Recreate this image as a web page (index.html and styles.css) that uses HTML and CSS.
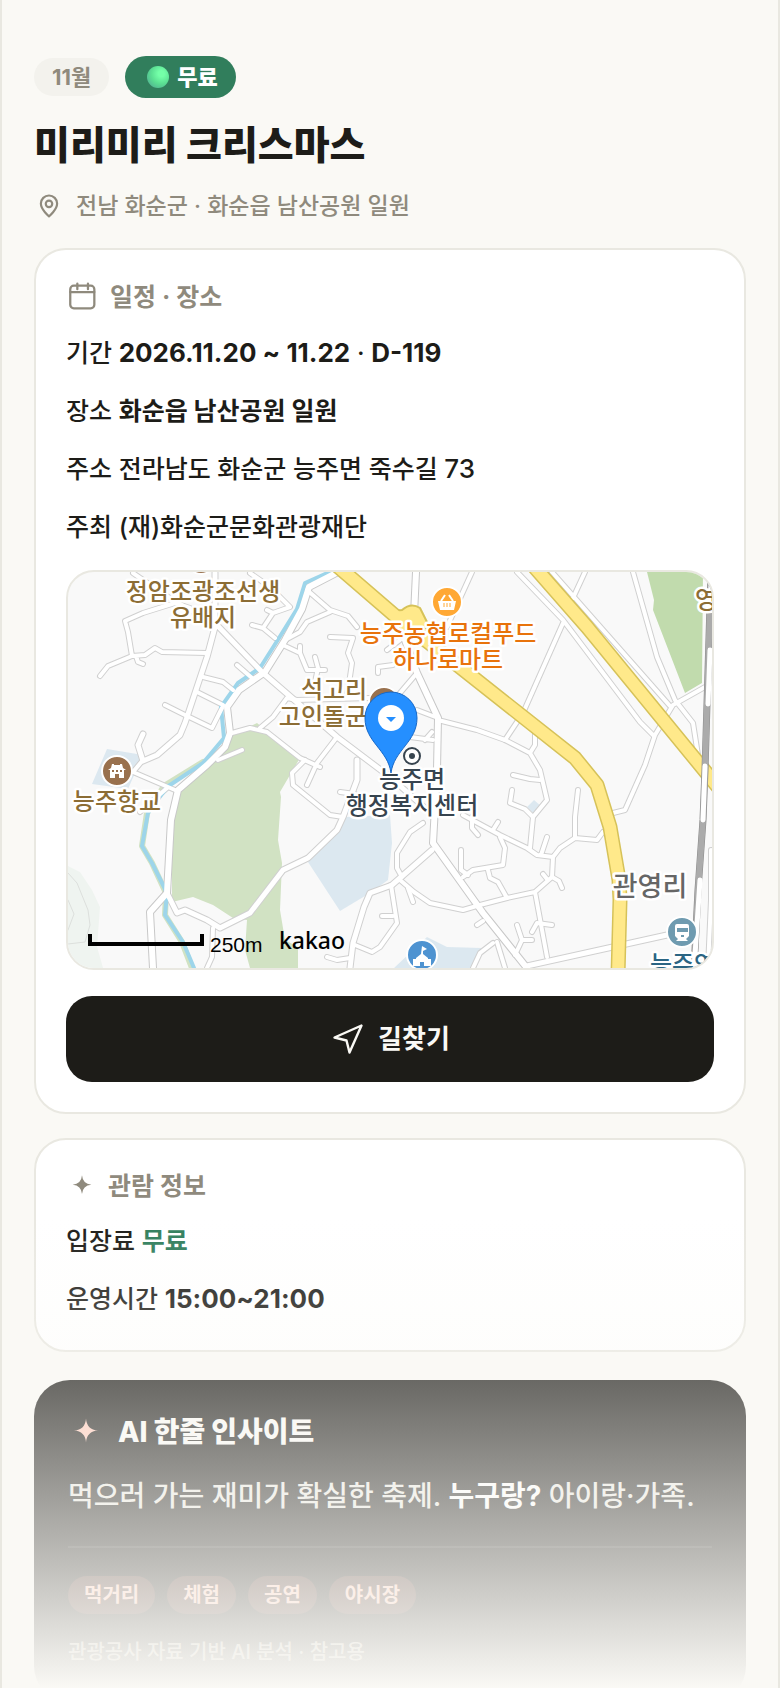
FILE: index.html
```html
<!DOCTYPE html>
<html lang="ko">
<head>
  <meta charset="UTF-8">
  <meta name="viewport" content="width=device-width, initial-scale=1.0">
  <title>미리미리 크리스마스</title>
  <link rel="stylesheet" href="styles.css">
</head>
<body>
  <main class="page">
    <header class="header">
      <div class="badges">
        <span class="badge">11월</span>
        <span class="badge badge-free"><span class="orb"></span>무료</span>
      </div>
      <h1>미리미리 크리스마스</h1>
      <p class="location">
        <svg class="icon-pin" viewBox="0 0 24 24"><path d="M12 21.5s-7.5-6-7.5-11.700a7.500 7.500 0 0 1 15 0c0 5.700-7.500 11.700-7.500 11.700z"/><circle cx="12" cy="10" r="3"/></svg>
        전남 화순군 · 화순읍 남산공원 일원
      </p>
    </header>

    <section class="card">
      <h2>
        <svg class="icon-calendar" viewBox="0 0 24 24"><rect x="3" y="4" width="17" height="16" rx="2.500"/><path d="M3 8.500h17M8 2.500v4M15.500 2.500v4"/></svg>
        일정 · 장소
      </h2>
      <div class="rows">
        <p>기간 <b class="num">2026.11.20 ~ 11.22</b> · <b class="num">D-119</b></p>
        <p>장소 <b>화순읍 남산공원 일원</b></p>
        <p>주소 전라남도 화순군 능주면 죽수길 <span class="num">73</span></p>
        <p>주최 (재)화순군문화관광재단</p>
      </div>

      <div class="map">
        <svg viewBox="68 572 644 396" preserveAspectRatio="xMidYMid slice">
          <defs>
            <g id="minor">
              <path d="M100 676L108 666 132 656 145 655 155 648 162 652 207 653M132 656L128 632 125 621 143 613 175 603 190 608M136 656L138 662 143 664"/>
              <path d="M133 573L165 595 215 625M203 677L223 682 233 690M197 692L223 705M222 708L212 728 185 715 165 705M237 665L252 678"/>
              <path d="M232 733L250 728 267 732 300 758 320 767M260 728L273 717 287 698 297 700 370 698M218 760L242 750"/>
              <path d="M307 590L330 610 348 616 357 627M330 612L307 622 300 632 285 640M250 573L270 587 290 607 273 613 263 628 275 638M267 610L273 613M252 625L263 628"/>
              <path d="M283 645L300 653 307 670 325 670M315 657L318 668 315 682M300 646V653M330 637L353 638 348 653 352 663 347 697M378 673V667L393 665"/>
              <path d="M337 737L317 763 307 785M305 760L292 773 293 785 330 815 343 817M133 772L175 790M133 772L143 760M140 812L167 788M340 792L355 794"/>
              <path d="M213 928L212 957 207 968M472 572L447 627M517 572L563 620 640 722 653 735M585 572L573 598M552 572L670 706M563 623L523 713 505 740"/>
              <path d="M633 572L657 657 675 700 693 723 698 755M705 687L673 705 655 735 645 765 625 810 613 813"/>
              <path d="M438 720L477 730 505 740 530 753 540 770 547 800 533 817 530 848M535 733V745L530 753M417 710L438 718M400 693L417 673M410 737L433 740M425 740L432 732"/>
              <path d="M513 775L530 779 540 780M512 790L510 803 525 809 533 817M578 790L575 817 575 838 560 848 553 857 537 855 527 848 500 835 463 815M575 838L597 840 603 832M547 837L541 855"/>
              <path d="M553 857L552 877 535 892 507 898 480 905 463 910 430 903 414 892 400 880M535 892L547 957M543 874L547 879M552 877L559 881 562 888M507 898L498 882 490 878 488 870"/>
              <path d="M461 850V870L468 875M463 877L473 870 503 865 505 848 500 837M498 822L493 830M472 817V828L478 835M423 823L410 832 397 853 397 868 402 877"/>
              <path d="M391 885L397 923 380 947 372 952 355 945M408 888L413 902M382 916H393M327 957L337 960 350 958M532 932L537 923 552 925M517 925L522 940 532 940M522 940L515 955M477 925L483 921M497 942L505 968M493 943L480 953 473 968"/>
              <path d="M711 850V900L708 968M387 650L400 640"/>
            </g>
            <g id="major">
              <path d="M215 573V627L207 657 185 723 180 735 157 755 143 761 138 745 143 734M215 623L262 672 337 737 390 777 425 808"/>
              <path d="M357 760V780L343 817 337 830 308 858 283 870 250 913 220 928 207 920 185 910 177 913 167 893M432 850L392 885 370 893 364 907 353 943 350 968"/>
              <path d="M527 966L667 935"/>
            </g>
            <g id="trunk">
              <path d="M338 572L309 587 302 609 285 640 265 672 239 690 227 707 230 733 225 747 207 765 178 790 171 820 167 893 150 912 153 968"/>
              <path d="M416 572L414 615M405 640L417 673 438 718 437 770 433 843 483 913 527 968"/>
            </g>
            <g id="highway">
              <path d="M335 564L400 620 460 667 575 758 597 785 610 827 619 880 620 900 618 975"/>
              <path d="M530 562L587 627 700 765 722 792"/>
            </g>
          </defs>

          <path class="hill" d="M60 862L80 872 92 890 100 907 97 947 103 968H60z"/>
          <path class="contour" d="M68 873L77 883 88 910 90 925 85 942 68 944M68 900L74 914 68 930"/>
          <path class="park" d="M232 735L257 723 300 758 280 792 281 797 278 840 282 863 280 910 285 940 298 947V968H250L245 950 247 920 233 918 213 905 193 897 172 902V827L177 793 215 762z"/>
          <path class="forest" d="M647 572H703L702 683 685 693 653 610 654 600z"/>
          <path class="site" d="M107 749L143 755 128 789 92 784zM308 862L337 830 345 817 390 815 392 843 388 880 370 893 340 911zM394 968L427 937 447 947 482 948 470 968zM527 807L534 800 542 807 533 813z"/>
          <path class="bank" d="M203 762L164 786 147 813 142 846 152 863 166 893 165 915 182 942 192 968"/>

          <use href="#minor" class="case-minor"/>
          <use href="#major" class="case-major"/>
          <use href="#trunk" class="case-trunk"/>
          <path class="river" d="M332 571L305 583 297 609 279 638 260 668 238 683 221 707 224 738 203 763 167 787 148 813 142 846 152 863 167 893 165 915 183 942 194 968"/>
          <use href="#minor" class="fill-minor"/>
          <use href="#major" class="fill-major"/>
          <use href="#trunk" class="fill-trunk"/>
          <use href="#highway" class="case-highway"/>
          <path class="junction" d="M391 611L402 610Q411 602 420 608Q424 616 430 628L412 630z"/>
          <use href="#highway" class="fill-highway"/>

          <path class="rail-case" d="M711 572L705 770 703 820 698 890 694 970"/>
          <path class="rail" d="M711 572L705 770 703 820 698 890 694 970"/>
          <path class="rail-dash" d="M711 572V608M710 650L708 704M705 766L703 820M700 880L694 970"/>

          <!-- place markers -->
          <g class="marker">
            <circle class="culture" cx="201" cy="560" r="14"/>
            <circle class="culture" cx="384" cy="702" r="15"/>
            <circle class="culture" cx="117" cy="771" r="15"/>
            <circle class="market" cx="447" cy="602" r="15"/>
            <circle class="school" cx="422" cy="955" r="15"/>
            <circle class="station" cx="682" cy="932" r="15"/>
          </g>
          <path class="glyph" d="M112 764h2v1h6v-1h2l1 4 3 2h-2v8h-5v-4h-4v4h-5v-8h-2l3-2zM438 601h18l-2 9h-14z"/>
          <path class="basket" d="M441 601l4-6M453 601l-4-6"/>
          <path class="market-line" d="M444 603v4M447 603v4M450 603v4"/>
          <path class="castle-line" d="M113 770v2M117 770v2M121 770v2"/>
          <path class="glyph" d="M422 946l5 3-4 2v3l5 4v1h3v7h-7v-4h-4v4h-7v-7h3v-1l5-4zM677 924h10a2 2 0 0 1 2 2v10l-3 3 2 2h-12l2-2-3-3v-10a2 2 0 0 1 2-2z"/>
          <path class="train-window" d="M677 928h11v4h-11zM681 935h3v2h-3z"/>

          <g class="label">
            <g class="culture">
              <text x="203" y="600">정암조광조선생</text>
              <text x="203" y="626">유배지</text>
              <text x="334" y="698">석고리</text>
              <text x="323" y="725">고인돌군</text>
              <text x="117" y="810">능주향교</text>
              <text x="706" y="608">영</text>
            </g>
            <g class="market">
              <text x="448" y="642">능주농협로컬푸드</text>
              <text x="448" y="668">하나로마트</text>
            </g>
            <g class="office">
              <text x="412" y="788">능주면</text>
              <text x="412" y="814">행정복지센터</text>
            </g>
            <text class="town" x="650" y="896">관영리</text>
            <text class="station" x="683" y="973">능주역</text>
          </g>

          <circle class="office-ring" cx="412" cy="756" r="8"/>
          <circle class="office-dot" cx="412" cy="756" r="3"/>

          <path class="pin" d="M391 773C388 750 365 742 365 718a26 26 0 0 1 52 0C417 742 394 750 391 773z"/>
          <circle class="pin-hole" cx="391" cy="718" r="13"/>
          <path class="pin-arrow" d="M386 717h10l-5 5z"/>

          <path class="scale" d="M90 934V944H202V934"/>
          <text class="scale-text" x="210" y="952">250m</text>
          <text class="kakao" x="279" y="949">kakao</text>
        </svg>
      </div>

      <button type="button" class="directions">
        <svg class="icon-nav" viewBox="0 0 24 24"><path d="M21 3L3 11l8 2 2 8z"/></svg>
        길찾기
      </button>
    </section>

    <section class="card">
      <h2>
        <svg class="icon-star" viewBox="0 0 24 24"><path d="M12 4Q12.500 10.500 19 11Q12.500 11.500 12 18Q11.500 11.500 5 11Q11.500 10.500 12 4z"/></svg>
        관람 정보
      </h2>
      <div class="rows">
        <p>입장료 <b class="free">무료</b></p>
        <p>운영시간 <b class="num">15:00~21:00</b></p>
      </div>
    </section>

    <section class="insight">
      <h2>
        <svg class="icon-star" viewBox="0 0 24 24"><path d="M12 3Q12.500 10.500 20 11Q12.500 11.500 12 19Q11.500 11.500 4 11Q11.500 10.500 12 3z"/></svg>
        AI 한줄 인사이트
      </h2>
      <p class="summary">먹으러 가는 재미가 확실한 축제. <b>누구랑?</b> 아이랑·가족.</p>
      <hr>
      <ul class="tags">
        <li>먹거리</li>
        <li>체험</li>
        <li>공연</li>
        <li>야시장</li>
      </ul>
      <p class="note">관광공사 자료 기반 AI 분석 · 참고용</p>
    </section>
  </main>
</body>
</html>
```
FILE: styles.css
```css
* {
  box-sizing: border-box;
}
body {
  margin: 0;
  background: #faf9f5;
  color: #1d1c18;
  font-family: Inter, "Noto Sans CJK KR", sans-serif;
  font-size: 25px;
}
h1, h2, p, ul {
  margin: 0;
  padding: 0;
}
svg {
  flex: none;
}

.page {
  position: relative;
  height: 100vh;
  overflow: hidden;
  padding: 56px 32px 0;
  border: solid #e9e8e1;
  border-width: 0 2px;
}
/* fades out the rest of the page */
.page::after {
  content: "";
  position: absolute;
  left: -2px;
  right: -2px;
  bottom: 0;
  height: 470px;
  background: linear-gradient(rgba(250, 249, 245, 0), #faf9f5);
  pointer-events: none;
}

/* header */
.badges {
  display: flex;
  align-items: center;
  gap: 16px;
}
.badge {
  display: flex;
  align-items: center;
  height: 38px;
  padding: 0 18px;
  border-radius: 21px;
  background: #f3f2ed;
  color: #8f8a7d;
  font-size: 22px;
  line-height: 26px;
  font-weight: 700;
}
.badge-free {
  height: 42px;
  padding: 0 18px 0 22px;
  gap: 8px;
  background: #317e5c;
  color: #fff;
  font-weight: 800;
}
.orb {
  width: 22px;
  height: 22px;
  border-radius: 50%;
  background: radial-gradient(circle at 65% 35%, #74ffa8 15%, #5ade92 50%, #4e9f92 100%);
}
h1 {
  margin-top: 18px;
  font-size: 39px;
  line-height: 58px;
  font-weight: 800;
}
.location {
  display: flex;
  align-items: center;
  gap: 12px;
  margin: 16px 0 26px;
  color: #8f8a7d;
  font-size: 23px;
  line-height: 32px;
  font-weight: 500;
}

/* icons */
.icon-pin, .icon-calendar, .icon-nav {
  fill: none;
  stroke: currentColor;
  stroke-width: 1.6;
  stroke-linecap: round;
  stroke-linejoin: round;
}
.icon-pin {
  width: 30px;
  height: 26px;
  stroke-width: 2;
}
.icon-calendar {
  width: 34px;
  height: 34px;
}
.icon-nav {
  width: 36px;
  height: 36px;
}
.icon-star {
  width: 32px;
  height: 32px;
  fill: currentColor;
}

/* cards */
.card {
  margin-bottom: 24px;
  padding: 30px;
  border: 2px solid #e9e8e1;
  border-radius: 32px;
  background: #fff;
}
.card h2 {
  display: flex;
  align-items: center;
  gap: 10px;
  margin-bottom: 18px;
  color: #8f8a7d;
  font-size: 25px;
  line-height: 32px;
  font-weight: 700;
}
.rows {
  display: flex;
  flex-direction: column;
  gap: 16px;
  line-height: 42px;
  font-weight: 500;
}
.rows b {
  font-weight: 700;
}
.num {
  font-size: 26px;
}
.rows .free {
  color: #317e5c;
}
.directions {
  display: flex;
  align-items: center;
  justify-content: center;
  gap: 12px;
  width: 100%;
  height: 86px;
  border: 0;
  border-radius: 26px;
  background: #1d1c18;
  color: #faf9f5;
  font: inherit;
  font-size: 26px;
  line-height: 32px;
  font-weight: 700;
}

/* map */
.map {
  height: 400px;
  margin: 22px 0 26px;
  overflow: hidden;
  border: 2px solid #e9e8e1;
  border-radius: 28px;
  background: #f9f9f9;
}
.map svg {
  display: block;
  width: 100%;
  height: 100%;
}
.map use, .bank, .river, .contour, .rail, .rail-case, .rail-dash {
  fill: none;
  stroke-linecap: round;
  stroke-linejoin: round;
}
.hill { fill: #eff4f0; }
.park { fill: #d1e2c3; }
.forest { fill: #c1dbad; }
.site { fill: #dce8f0; }
.contour { stroke: #dcdfdc; }
.bank { stroke: #d1e2c3; stroke-width: 6; }
.river { stroke: #9dd5ea; stroke-width: 4; }
.case-minor { stroke: #d0d0d0; stroke-width: 6; }
.fill-minor { stroke: #fff; stroke-width: 4; }
.case-major { stroke: #d0d0d0; stroke-width: 7; }
.fill-major { stroke: #fff; stroke-width: 5; }
.case-trunk { stroke: #c8c8c8; stroke-width: 8; }
.fill-trunk { stroke: #fff; stroke-width: 6; }
.case-highway { stroke: #d6c259; stroke-width: 15; }
.fill-highway { stroke: #ffe98a; stroke-width: 12; }
.junction { fill: #ffe98a; stroke: #d6c259; stroke-width: 2; }
.rail-case { stroke: #8c8c8c; stroke-width: 7; }
.rail { stroke: #ababab; stroke-width: 6; }
.rail-dash { stroke: #fff; stroke-width: 5; }

.marker circle { stroke: #fff; stroke-width: 2; }
.marker .culture { fill: #99714e; }
.marker .market { fill: #ffa834; }
.marker .school { fill: #4e93d1; }
.marker .station { fill: #6f9bb0; }
.glyph { fill: #fff; }
.basket { fill: none; stroke: #fff; stroke-width: 2; }
.market-line { stroke: #ffa834; stroke-width: 1; }
.castle-line { stroke: #99714e; stroke-width: 2; }
.train-window { fill: #6f9bb0; }

.label text {
  font-size: 24px;
  font-weight: 500;
  text-anchor: middle;
  stroke: #fff;
  stroke-width: 5;
  stroke-linejoin: round;
  paint-order: stroke;
}
.label .culture { fill: #8c6d35; }
.label .market { fill: #e8730c; }
.label .office { fill: #37444f; }
.label .station { fill: #2b6583; }
.label .town {
  fill: #666;
  font-size: 27px;
}
.office-ring { fill: #fff; stroke: #37444f; stroke-width: 2; }
.office-dot { fill: #37444f; }
.pin { fill: #258fff; stroke: #1668c8; stroke-width: 1; }
.pin-hole { fill: #fff; }
.pin-arrow { fill: #258fff; }
.scale { fill: none; stroke: #000; stroke-width: 4; }
.scale-text { font: 21px "Liberation Sans", sans-serif; }
.kakao { font: 500 23px "Noto Sans", sans-serif; }

/* ai insight */
.insight {
  margin-top: 28px;
  padding: 34px;
  border-radius: 36px;
  background: #1d1c18;
  color: #e9e8e1;
}
.insight h2 {
  display: flex;
  align-items: center;
  gap: 14px;
  color: #faf9f5;
  font-size: 28px;
  line-height: 36px;
  font-weight: 800;
}
.insight .icon-star {
  width: 36px;
  height: 36px;
  color: #ffc9b8;
}
.summary {
  margin-top: 22px;
  font-size: 28px;
  line-height: 48px;
  font-weight: 500;
}
.summary b {
  color: #fff;
  font-weight: 700;
}
.insight hr {
  height: 2px;
  margin: 26px 0 28px;
  border: 0;
  background: #33322e;
}
.tags {
  display: flex;
  gap: 12px;
  list-style: none;
}
.tags li {
  height: 38px;
  padding: 0 16px;
  border-radius: 19px;
  background: #4a3029;
  color: #ffc9b8;
  font-size: 20px;
  line-height: 38px;
  font-weight: 700;
}
.note {
  margin-top: 22px;
  color: #b5b1a6;
  font-size: 20px;
  line-height: 32px;
  font-weight: 500;
}
```
